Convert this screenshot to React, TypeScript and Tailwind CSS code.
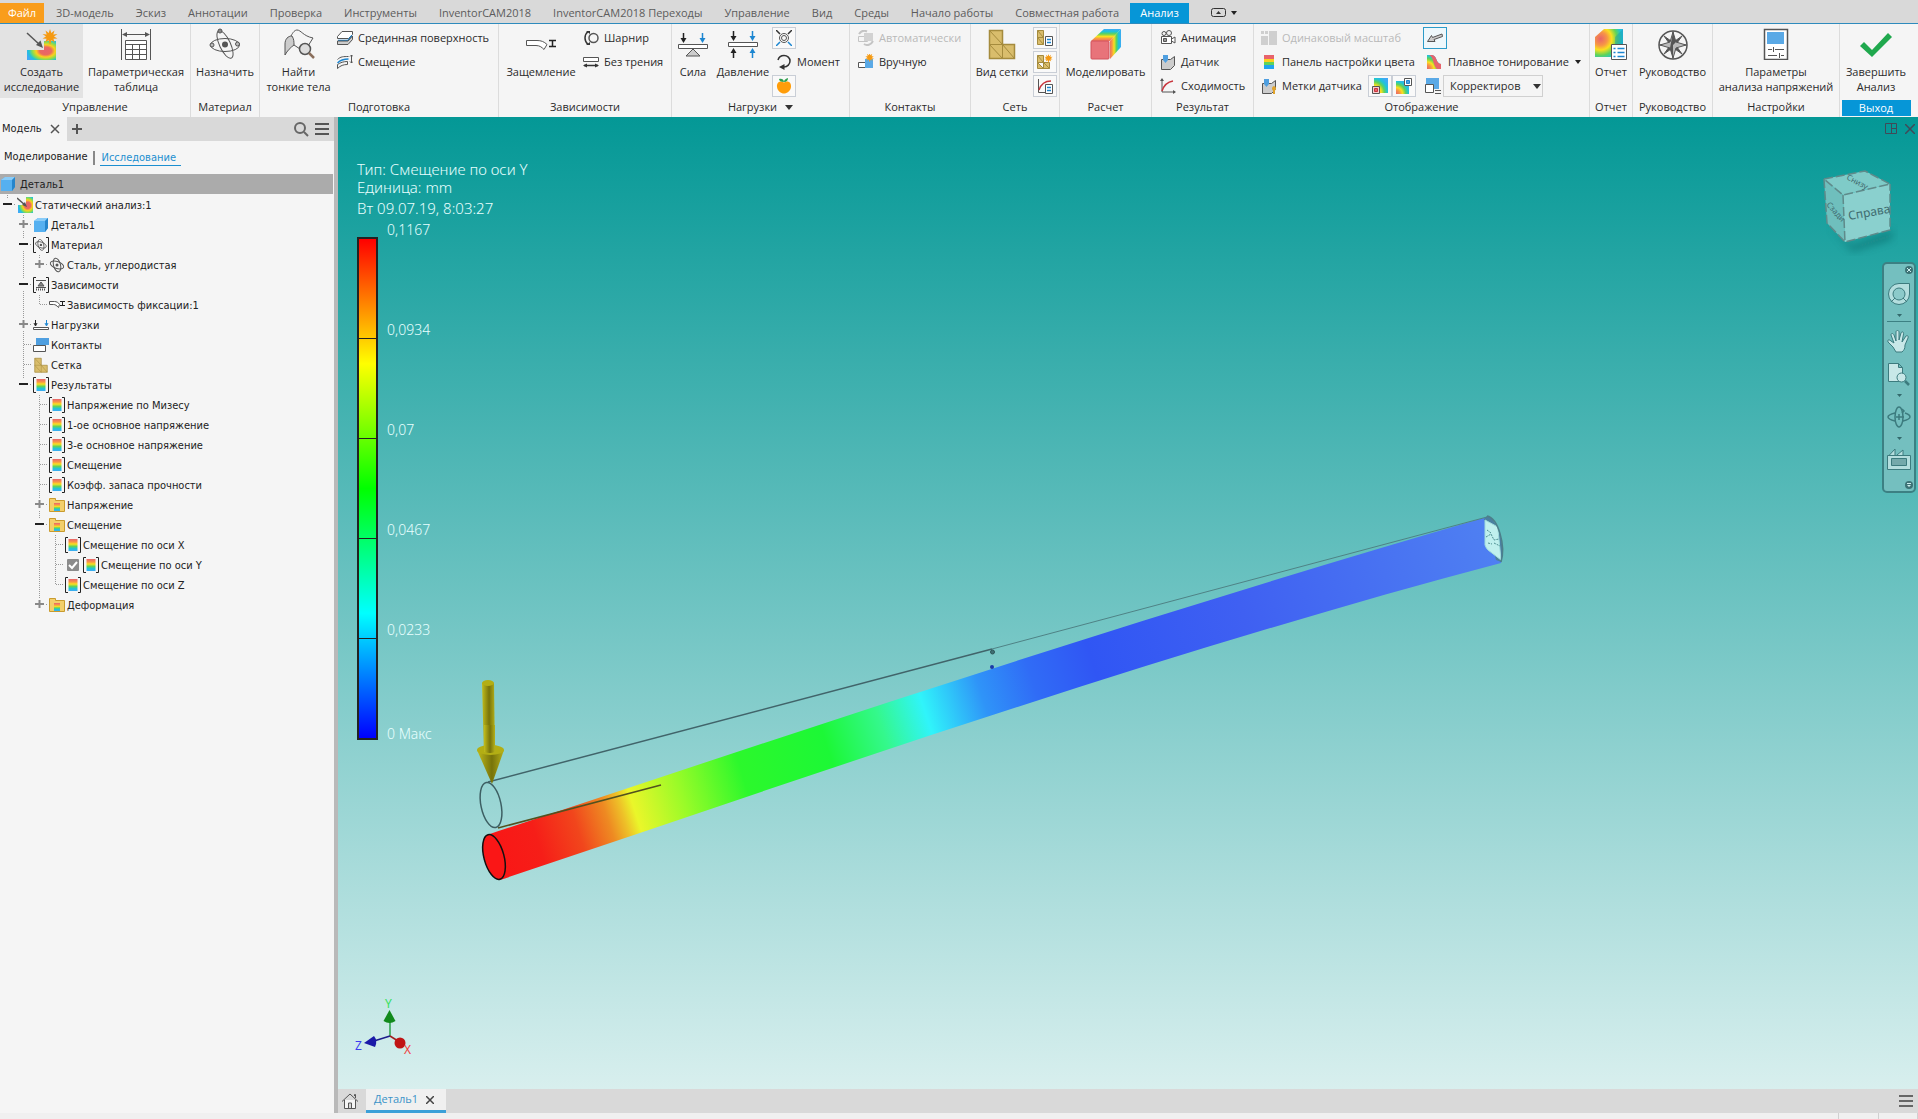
import type { ReactNode } from 'react';

const TABS_TOP = [
  '3D-модель',
  'Эскиз',
  'Аннотации',
  'Проверка',
  'Инструменты',
  'InventorCAM2018',
  'InventorCAM2018 Переходы',
  'Управление',
  'Вид',
  'Среды',
  'Начало работы',
  'Совместная работа',
];

const RAINBOW: [string, string][] = [
  ['0', '#e8636b'],
  ['0.25', '#f79646'],
  ['0.42', '#fbe01e'],
  ['0.62', '#5fd35a'],
  ['0.8', '#1fc4d8'],
  ['1', '#3fa9f5'],
];

/* ---------- gradients shared by the icons ---------- */

function Defs() {
  const stops = RAINBOW.map(([o, c]) => <stop key={o} offset={o} stopColor={c} />);
  return (
    <svg className="absolute h-0 w-0" aria-hidden="true">
      <defs>
        <linearGradient id="rain" x1="0" y1="0" x2="0" y2="1">{stops}</linearGradient>
        <linearGradient id="rainTop" gradientUnits="userSpaceOnUse" x1="0" y1="14" x2="0" y2="1">{stops}</linearGradient>
        <linearGradient id="rainSide" gradientUnits="userSpaceOnUse" x1="19" y1="0" x2="31" y2="0">{stops}</linearGradient>
        <radialGradient id="heat" cx="0.64" cy="0.52" r="0.68">
          <stop offset="0" stopColor="#e8636b" />
          <stop offset="0.3" stopColor="#ea6a5e" />
          <stop offset="0.48" stopColor="#fbd01e" />
          <stop offset="0.66" stopColor="#8fdc4a" />
          <stop offset="0.85" stopColor="#1fc4d8" />
          <stop offset="1" stopColor="#3fa9f5" />
        </radialGradient>
        <radialGradient id="heatL" cx="0.2" cy="0.35" r="0.95">{stops}</radialGradient>
        <radialGradient id="heatB" cx="0" cy="1" r="1.2">{stops}</radialGradient>
      </defs>
    </svg>
  );
}

function Svg({ size = 16, className = '', children }: { size?: 16 | 32; className?: string; children: ReactNode }) {
  return (
    <svg
      viewBox={`0 0 ${size} ${size}`}
      className={`${size === 32 ? 'h-8 w-8' : 'h-4 w-4'} shrink-0 ${className}`}
      fill="none"
      stroke="#555"
      aria-hidden="true"
    >
      {children}
    </svg>
  );
}

const STAR = 'M8 0l1.3 4 3.2-2.600-1.200 4 4.200-.4-3.500 2.500 3.500 2-4.100.3 1.500 3.700-3.400-2.300L8 16l-1.500-4.800-3.400 2.300 1.500-3.700L.5 9.500l3.500-2L.5 5l4.200.4-1.200-4L6.700 4z';

const IconStudy = () => (
  <Svg size={32}>
    <path d="M1 22h17v-9h12v19H1z" fill="url(#heat)" stroke="none" />
    <path d="M1 5l13 12" strokeWidth="1.5" />
    <path d="M17 20l-7-3 4.500-4.500z" fill="#555" stroke="none" />
    <g transform="translate(16 1)"><path d={STAR} fill="#f59a12" stroke="none" /></g>
  </Svg>
);

const IconTable = () => (
  <Svg size={32}>
    <path d="M1.500 1v31M30.500 1v31M3 6.500h26" />
    <path d="M2 6.500l5-2.500v5zM30 6.500l-5-2.500v5z" fill="#555" stroke="none" />
    <path d="M5.500 12.500h21v19h-21z" fill="#fff" />
    <path d="M5.500 16.500h21M5.500 21.500h21M5.500 26.500h21M12.500 16.500v15M19.500 16.500v15" />
  </Svg>
);

const IconAtom = () => (
  <Svg size={32}>
    <ellipse cx="16" cy="17" rx="14.500" ry="6.500" />
    <ellipse cx="16" cy="16.500" rx="15" ry="5.500" transform="rotate(65 16 16.500)" />
    <circle cx="16" cy="16.500" r="3" fill="#555" stroke="none" />
    <circle cx="11" cy="3" r="2" fill="#888" />
    <circle cx="3" cy="17" r="2" fill="#bbb" />
    <circle cx="28.500" cy="16" r="2" fill="#bbb" />
  </Svg>
);

const IconThin = () => (
  <Svg size={32}>
    <path d="M2 27V16C2 11 5 8 9 8c2 3 2 6 2 9-3 2-7 6-9 10z" fill="#ccc" />
    <path d="M8 8c2-4 4-6 6-6 4 0 6 6 16 8l-5 8M11 17l6 4" />
    <circle cx="22" cy="21" r="5.500" fill="#ddd" strokeWidth="1.500" />
    <path d="M26 25l5 5" stroke="#8a6f5c" strokeWidth="2.500" />
  </Svg>
);

const IconMidsurface = () => (
  <Svg>
    <path d="M.5 6.500L5 1.500h10.500v3l-4 4H.5z" fill="#fff" />
    <path d="M1 10.500h10l4-5" stroke="#1c86d1" strokeWidth="1.500" />
    <path d="M.5 11v3.500H11l4.500-5V6L11 11z" fill="#ccc" />
  </Svg>
);

const IconOffset = () => (
  <Svg>
    <path d="M.5 5.500c3-3 6-3 11-3M.5 14.500v-4c3-2 6-3 10-3v3c-4 0-7 1-10 4z" />
    <path d="M.5 9c3-3 6-4 11-4" stroke="#1c86d1" strokeWidth="1.500" />
    <path d="M14.500 1v8M13 2.500L14.500 1 16 2.500M13 7.500L14.500 9 16 7.500" />
  </Svg>
);

const IconFixed = () => (
  <Svg size={32}>
    <path d="M1.500 12.500H12c4 0 7 1 10 4l-3 5c-2-2-4-4-8-4H1.500z" fill="#fff" />
    <path d="M24 12.500h7M24 18.500h7M27.500 12.500v6" stroke="#222" strokeWidth="1.500" />
  </Svg>
);

const IconPin = () => (
  <Svg>
    <path d="M5 1.500C1 5 1 11 5 14.500" stroke="#333" strokeWidth="1.500" />
    <path d="M3 1h4v3zM3 15h4v-3z" fill="#333" stroke="none" />
    <circle cx="10.500" cy="8" r="4.500" strokeWidth="1.500" />
  </Svg>
);

const IconFrictionless = () => (
  <Svg>
    <path d="M.5 3.500h15v4H.5z" fill="#fff" />
    <path d="M1 11.500h14" stroke="#333" strokeWidth="1.500" />
    <path d="M0 11.500L4 9.500v4zM16 11.500l-4-2v4z" fill="#333" stroke="none" />
  </Svg>
);

const IconForce = () => (
  <Svg size={32}>
    <path d="M1.500 16.500h29v4h-29z" fill="#fff" />
    <path d="M16 21l-7 7h14z" fill="#ccc" />
    <path d="M6.500 5v8" stroke="#222" strokeWidth="1.500" />
    <path d="M3.500 10h6l-3 5z" fill="#222" stroke="none" />
    <path d="M25.500 5v8" stroke="#1c86d1" strokeWidth="1.500" />
    <path d="M22.500 10h6l-3 5z" fill="#1c86d1" stroke="none" />
  </Svg>
);

const IconPressure = () => (
  <Svg size={32}>
    <path d="M1.500 14.500h29v4h-29z" fill="#fff" />
    <path d="M6.500 3v7M6.500 23v7" stroke="#222" strokeWidth="1.500" />
    <path d="M3.500 8h6l-3 5zM3.500 25h6l-3-5z" fill="#222" stroke="none" />
    <path d="M25.500 3v7M25.500 23v7" stroke="#1c86d1" strokeWidth="1.500" />
    <path d="M22.500 8h6l-3 5zM22.500 25h6l-3-5z" fill="#1c86d1" stroke="none" />
  </Svg>
);

const IconBearing = () => (
  <Svg>
    <circle cx="8" cy="8" r="4.500" />
    <circle cx="8" cy="8" r="2.500" />
    <path d="M0 0l4 4M16 0l-4 4" stroke="#333" strokeWidth="1.500" />
    <path d="M0 16l4-4M16 16l-4-4" stroke="#1c86d1" strokeWidth="1.500" />
  </Svg>
);

const IconMoment = () => (
  <Svg>
    <path d="M2 6C3 2.500 5 1.500 8 1.500c3.500 0 6 2.500 6 5.500s-2.500 6-6 6H7" stroke="#333" strokeWidth="1.500" />
    <path d="M8.500 10v6L3 13z" fill="#333" stroke="none" />
  </Svg>
);

const IconGravity = () => (
  <Svg>
    <path d="M8 4.500C4 2 .5 4.500 1 9c.5 4 4 6.500 7 6.500s6.500-2.500 7-6.500c.5-4.500-3-7-7-4.500z" fill="#ff9d0a" stroke="none" />
    <path d="M3 1c2-1 5 0 5 3-3 0-5-1-5-3zM8 4c0-2 1-3 4-4 0 2-1 4-4 4z" fill="#2e9e4f" stroke="none" />
  </Svg>
);

const IconAuto = () => (
  <Svg>
    <path d="M1 4C3 1 6 0 9 1.500M6 14c3 2 7 1 9-3" stroke="#c4c4c4" strokeWidth="2" />
    <path d="M.5 6.500h9v5h-9z" stroke="#c4c4c4" />
    <path d="M6 3h9v8H6z" fill="#d2d2d2" stroke="none" />
  </Svg>
);

const IconManual = () => (
  <Svg>
    <path d="M.5 8.500h8v5h-8z" fill="#fff" />
    <path d="M7 5h8v9H7z" fill="#5aa9e6" stroke="none" />
    <g transform="translate(7 -1) scale(.58)"><path d={STAR} fill="#f59a12" stroke="none" /></g>
  </Svg>
);

const IconMesh = ({ size = 32 }: { size?: 16 | 32 }) => (
  <svg viewBox="0 0 32 32" className={size === 32 ? 'h-8 w-8' : 'h-4 w-4 shrink-0'} fill="#d9bd6c" stroke="#a58b3d" aria-hidden="true">
    <path d="M3.500 2.500h13v14h12v14h-25z" strokeWidth="1.500" />
    <path d="M3.500 2.500l13 14h-13l13 14v-14l12 14" />
  </svg>
);

const Sheet = () => (
  <g>
    <path d="M8.500 6.500h7v9h-7z" fill="#fff" />
    <path d="M10 9.500h4M10 12.500h4" stroke="#1c86d1" strokeWidth="1.500" />
  </g>
);

const IconMeshSettings = () => (
  <Svg>
    <path d="M.5.500h6v14h-6zM.5 7.500h6M.5.500l6 7M.5 7.500l6 7" fill="#d9bd6c" stroke="#a58b3d" />
    <Sheet />
  </Svg>
);

const IconMeshLocal = () => (
  <Svg>
    <path d="M.5 1.500h6v7h6v6h-12zM.5 1.500l6 7H.5l6 6v-6l6 6" fill="#d9bd6c" stroke="#a58b3d" />
    <g transform="translate(7 0) scale(.56)"><path d={STAR} fill="#f59a12" stroke="none" /></g>
  </Svg>
);

const IconConvSettings = () => (
  <Svg>
    <path d="M1.500 1v13.500H8" />
    <path d="M2 12C4 6 8 3 14 3" stroke="#c8343c" strokeWidth="1.500" />
    <Sheet />
  </Svg>
);

const IconSimulate = () => (
  <Svg size={32}>
    <path d="M1 13L14 1h17L20 13z" fill="url(#rainTop)" stroke="none" />
    <path d="M20 13L31 1v18L20 31z" fill="url(#rainSide)" stroke="none" />
    <rect x="1" y="13" width="18" height="18" rx="1" fill="#e8737a" stroke="#d2525c" />
  </Svg>
);

const IconAnimation = () => (
  <Svg>
    <circle cx="4" cy="3.500" r="2" /><circle cx="9" cy="3" r="2.500" />
    <path d="M1.500 6.500h10v7h-10zM11.500 9l3.500-2v6l-3.500-2" fill="#fff" />
    <path d="M3.500 8.500h3v3h-3z" fill="#999" />
  </Svg>
);

const IconProbe = ({ tag = false }: { tag?: boolean }) => (
  <Svg>
    <path d="M1.500 5.500h9l4-3v9l-4 4h-9z" fill="#ccc" />
    <path d="M3 1h5v5L5.500 9 3 6z" fill="#4f9fe0" stroke="none" />
    {tag && <path d="M13 8a2.500 2.500 0 011 4.500V16h-2v-3.500A2.500 2.500 0 0113 8z" fill="#e0a32c" stroke="none" />}
  </Svg>
);

const IconConvergence = () => (
  <Svg>
    <path d="M2 1v13h13" />
    <path d="M0 3L2 0l2 3zM13 12l3 2-3 2z" fill="#555" stroke="none" />
    <path d="M2 13C4 7 7 4 13 3" stroke="#c8343c" strokeWidth="1.500" />
  </Svg>
);

const IconScale = () => (
  <Svg>
    <path d="M0 6h7v9H0zM8 1h8v14H8zM0 1h3v3H0zM4 1h3v3H4z" fill="#cfcfcf" stroke="none" />
  </Svg>
);

const IconColorBar = () => (
  <Svg>
    <rect x="3" y="1" width="10" height="4" fill="#e8636b" stroke="none" />
    <rect x="3" y="5" width="10" height="3" fill="#fbd01e" stroke="none" />
    <rect x="3" y="8" width="10" height="3" fill="#5fd35a" stroke="none" />
    <rect x="3" y="11" width="10" height="4" fill="#1fa4f0" stroke="none" />
  </Svg>
);

const IconMax = () => (
  <Svg>
    <path d="M2 0h14v15H8c0-5-2-7-6-7z" fill="url(#heatB)" stroke="none" />
    <path d="M.5 8.500h7v7h-7z" fill="#f7d0d0" />
    <path d="M2.500 10.500h3v3h-3z" fill="#e8636b" stroke="#c8343c" />
  </Svg>
);

const IconMin = () => (
  <Svg>
    <path d="M0 3h8v5h5v8H0z" fill="url(#heatB)" stroke="none" />
    <path d="M8.500.500h7v7h-7z" fill="#fff" />
    <path d="M10.500 2.500h3v3h-3z" fill="#4f9fe0" stroke="#1c86d1" />
  </Svg>
);

const IconBoundary = () => (
  <Svg>
    <path d="M.5 11.500l4-6 1 2L15 4l.5 2.500L7 9.500l1 2z" fill="#ccc" />
  </Svg>
);

const IconShading = () => (
  <Svg>
    <path d="M1 1h5c5 0 4 9 9 9v5H1z" fill="url(#heatB)" stroke="none" />
    <path d="M3 1h3c5 0 4 9 9 9v5h-4C7 12 8 3 3 1z" fill="#e8636b" stroke="none" />
  </Svg>
);

const IconAdjust = () => (
  <Svg>
    <path d="M1 0h13v11H1z" fill="#5aa9e6" stroke="none" />
    <path d="M.5 6.500h8v8h-8z" fill="#fff" />
    <path d="M10 12.500h6M10 15.500h6" />
  </Svg>
);

const IconReport = () => (
  <Svg size={32}>
    <path d="M0 9l9-8h19v28H0z" fill="url(#heatL)" stroke="none" />
    <path d="M20 9l8-8v28h-8z" fill="#1b9bb0" opacity=".45" stroke="none" />
    <path d="M16.500 16.500h15v15h-15z" fill="#fff" />
    <path d="M18.500 20.500h2M18.500 24.500h2M18.500 28.500h2M22.500 20.500h7M22.500 24.500h7M22.500 28.500h7" stroke="#1c86d1" strokeWidth="1.500" />
  </Svg>
);

const IconGuide = () => (
  <Svg size={32}>
    <circle cx="16" cy="17" r="14" strokeWidth="1.500" />
    <path d="M16 3v28M2 17h28" />
    <path d="M7 8l7 5-2 2zM25 8l-7 5 2 2zM7 26l7-5-2-2zM25 26l-7-5 2-2z" fill="#555" />
    <path d="M16 4l3 10 10 3-10 3-3 10-3-10-10-3 10-3z" fill="#bbb" />
    <path d="M16 4v26l-3-10zM16 4l3 10-3 3z" fill="#555" stroke="none" />
  </Svg>
);

const IconSettings = () => (
  <Svg size={32}>
    <path d="M4.500 1.500h23v30h-23z" fill="#fff" strokeWidth="1.500" />
    <path d="M7 4h17v12H7z" fill="#5aa9e6" stroke="none" />
    <path d="M8 21.500h4M15 21.500h9M13.500 19v5M8 27.500h9M21 27.500h3M19.500 25v5" />
  </Svg>
);

const IconFinish = () => (
  <Svg size={32}>
    <path d="M0 18l4-4 8 8L28 5l4 4-20 20z" fill="#1fa84d" stroke="none" />
  </Svg>
);

/* ---------- tree icons ---------- */

const IconPart = () => (
  <Svg>
    <path d="M1 4l4-3h10v10l-3 4H1z" fill="#55b0f0" stroke="none" />
    <path d="M1 4l4-3h10l-3 3z" fill="#8accf8" stroke="none" />
    <path d="M12 4l3-3v10l-3 4z" fill="#2585cb" stroke="none" />
  </Svg>
);

const IconStudySmall = () => (
  <Svg>
    <path d="M1 8h8V0h7v16H1z" fill="url(#heat)" stroke="none" />
    <path d="M0 1l8 7" strokeWidth="1.500" />
    <path d="M10 10L5 8l3-3z" fill="#555" stroke="none" />
  </Svg>
);

const Brackets = () => <path d="M3 .5H.500v15H3M13 .5h2.500v15H13" stroke="#222" />;

const AtomShape = () => (
  <g>
    <ellipse cx="8" cy="8" rx="7" ry="3.500" transform="rotate(20 8 8)" />
    <ellipse cx="8" cy="8" rx="7" ry="3.500" transform="rotate(75 8 8)" />
    <circle cx="8" cy="8" r="1.500" fill="#555" stroke="none" />
  </g>
);

const IconMaterial = () => (
  <Svg><Brackets /><g transform="translate(1.500 1.500) scale(.8)"><AtomShape /></g></Svg>
);

const IconSteel = () => <Svg><AtomShape /></Svg>;

const IconConstraints = () => (
  <Svg>
    <Brackets />
    <path d="M3 3.500h10M8 5l-3 4h6zM3 10.500h10" fill="#888" />
    <path d="M3 12.500h10" strokeDasharray="1 1" strokeWidth="2" />
  </Svg>
);

const IconFixSmall = () => (
  <Svg>
    <path d="M.5 4.500h5c2 0 4 1 5 3l-1 3c-2-2-3-3-5-3h-4z" fill="#fff" />
    <path d="M11 4.500h5M11 8.500h5M13.500 4.500v4" stroke="#222" />
  </Svg>
);

const IconLoads = () => (
  <Svg>
    <path d="M.5 10.500h15v2H.5z" fill="#fff" />
    <path d="M2.500 3v5M1 6l1.500 3L4 6" stroke="#222" />
    <path d="M13.500 3v5M12 6l1.500 3L15 6" stroke="#1c86d1" />
  </Svg>
);

const IconContacts = () => (
  <Svg>
    <path d="M3 1h13v7H3z" fill="#4f9fe0" stroke="none" />
    <path d="M.5 8.500h12v6H.500z" fill="#fff" />
  </Svg>
);

const IconResult = () => (
  <Svg>
    <Brackets />
    <path d="M3.500 2h9v12h-9z" fill="url(#rain)" stroke="none" />
  </Svg>
);

const IconFolder = () => (
  <Svg>
    <path d="M.5 1.500h6v2h9v11H.5z" fill="#f3cf6b" stroke="#c89b2e" />
    <path d="M5 6h6v8H5z" fill="url(#rain)" stroke="none" />
  </Svg>
);

/* ---------- ribbon ---------- */

function Big({ icon, lines, active = false, className = '' }: { icon: ReactNode; lines: string[]; active?: boolean; className?: string }) {
  return (
    <button className={`flex h-[74px] shrink-0 flex-col items-center gap-1 pt-1 leading-[15px] ${active ? 'bg-[#e3e3e3]' : ''} ${className}`}>
      {icon}
      <span className="flex flex-col whitespace-nowrap">
        {lines.map((l) => <span key={l}>{l}</span>)}
      </span>
    </button>
  );
}

function Small({ icon, label, disabled = false }: { icon: ReactNode; label: string; disabled?: boolean }) {
  return (
    <button disabled={disabled} className="flex h-6 items-center gap-[5px] whitespace-nowrap disabled:text-[#b9b9b9]">
      {icon}
      {label}
    </button>
  );
}

function Boxed({ icon, label, active = false }: { icon: ReactNode; label: string; active?: boolean }) {
  return (
    <button
      aria-label={label}
      className={`flex h-[22px] w-6 items-center justify-center border ${active ? 'border-[#2b9bc9] bg-[#eef8fc]' : 'border-[#c9ced6] bg-[#f9f9f9]'}`}
    >
      {icon}
    </button>
  );
}

function Group({ title, className, children }: { title: ReactNode; className: string; children: ReactNode }) {
  return (
    <section className={`flex shrink-0 flex-col border-r border-[#dcdcdc] ${className}`}>
      <div className="flex h-[74px] items-start">{children}</div>
      <div className="flex h-[19px] items-center justify-center whitespace-nowrap">{title}</div>
    </section>
  );
}

const Col = ({ className = 'pt-[2px]', children }: { className?: string; children: ReactNode }) => (
  <div className={`flex flex-col items-start ${className}`}>{children}</div>
);

const Caret = () => (
  <svg viewBox="0 0 8 5" className="h-[5px] w-2" fill="#333" aria-hidden="true"><path d="M0 0h8L4 5z" /></svg>
);

const CaretSmall = () => (
  <svg viewBox="0 0 6 4" className="h-1 w-[6px]" fill="#222" aria-hidden="true"><path d="M0 0h6L3 4z" /></svg>
);

function Ribbon() {
  return (
    <div className="flex h-[93px] overflow-hidden bg-[#f5f5f5] text-[11px] text-[#2b2b2b]">
      <Group title="Управление" className="w-[191px]">
        <Big active icon={<IconStudy />} lines={['Создать', 'исследование']} className="w-[83px]" />
        <Big icon={<IconTable />} lines={['Параметрическая', 'таблица']} className="w-[106px]" />
      </Group>
      <Group title="Материал" className="w-[69px]">
        <Big icon={<IconAtom />} lines={['Назначить']} className="w-full" />
      </Group>
      <Group title="Подготовка" className="w-[239px]">
        <Big icon={<IconThin />} lines={['Найти', 'тонкие тела']} className="w-[77px]" />
        <Col>
          <Small icon={<IconMidsurface />} label="Срединная поверхность" />
          <Small icon={<IconOffset />} label="Смещение" />
        </Col>
      </Group>
      <Group title="Зависимости" className="w-[173px]">
        <Big icon={<IconFixed />} lines={['Защемление']} className="w-[84px]" />
        <Col>
          <Small icon={<IconPin />} label="Шарнир" />
          <Small icon={<IconFrictionless />} label="Без трения" />
        </Col>
      </Group>
      <Group title={<span className="flex items-center gap-2">Нагрузки <Caret /></span>} className="w-[178px]">
        <Big icon={<IconForce />} lines={['Сила']} className="w-[42px]" />
        <Big icon={<IconPressure />} lines={['Давление']} className="w-[58px]" />
        <Col className="gap-[2px] pt-[3px]">
          <Boxed icon={<IconBearing />} label="Опорная нагрузка" />
          <button className="flex h-[22px] items-center gap-[5px] pl-1"><IconMoment />Момент</button>
          <Boxed icon={<IconGravity />} label="Сила тяжести" />
        </Col>
      </Group>
      <Group title="Контакты" className="w-[121px]">
        <Col className="pt-[2px] pl-2">
          <Small disabled icon={<IconAuto />} label="Автоматически" />
          <Small icon={<IconManual />} label="Вручную" />
        </Col>
      </Group>
      <Group title="Сеть" className="w-[89px]">
        <Big icon={<IconMesh />} lines={['Вид сетки']} className="w-[62px]" />
        <Col className="gap-[2px] pt-[3px]">
          <Boxed icon={<IconMeshSettings />} label="Параметры сетки" />
          <Boxed icon={<IconMeshLocal />} label="Локальная сетка" />
          <Boxed icon={<IconConvSettings />} label="Параметры сходимости" />
        </Col>
      </Group>
      <Group title="Расчет" className="w-[92px]">
        <Big icon={<IconSimulate />} lines={['Моделировать']} className="w-full" />
      </Group>
      <Group title="Результат" className="w-[102px]">
        <Col className="pt-[2px] pl-2">
          <Small icon={<IconAnimation />} label="Анимация" />
          <Small icon={<IconProbe />} label="Датчик" />
          <Small icon={<IconConvergence />} label="Сходимость" />
        </Col>
      </Group>
      <Group title="Отображение" className="w-[336px]">
        <Col className="mr-[7px] w-[162px] pt-[2px] pl-[7px]">
          <Small disabled icon={<IconScale />} label="Одинаковый масштаб" />
          <Small icon={<IconColorBar />} label="Панель настройки цвета" />
          <div className="flex w-full items-center justify-between">
            <Small icon={<IconProbe tag />} label="Метки датчика" />
            <div className="flex">
              <Boxed icon={<IconMax />} label="Максимум" />
              <Boxed icon={<IconMin />} label="Минимум" />
            </div>
          </div>
        </Col>
        <Col className="gap-[2px] pt-[3px]">
          <Boxed active icon={<IconBoundary />} label="Граничные условия" />
          <button className="flex h-[22px] items-center gap-[6px] whitespace-nowrap pl-[3px]">
            <IconShading />Плавное тонирование<CaretSmall />
          </button>
          <label className="flex h-[22px] items-center gap-[2px] pl-[2px]">
            <IconAdjust />
            <span className="relative flex items-center">
              <select aria-label="Масштаб смещения" className="h-[22px] w-[100px] appearance-none border border-[#d0d0d0] bg-[#f5f5f5] px-[6px]">
                <option>Корректиров</option>
              </select>
              <span className="pointer-events-none absolute right-[2px]"><Caret /></span>
            </span>
          </label>
        </Col>
      </Group>
      <Group title="Отчет" className="w-[43px]">
        <Big icon={<IconReport />} lines={['Отчет']} className="w-full" />
      </Group>
      <Group title="Руководство" className="w-20">
        <Big icon={<IconGuide />} lines={['Руководство']} className="w-full" />
      </Group>
      <Group title="Настройки" className="w-[127px]">
        <Big icon={<IconSettings />} lines={['Параметры', 'анализа напряжений']} className="w-full" />
      </Group>
      <Group title={<span className="w-[69px] bg-[#0696d7] text-center leading-4 text-white">Выход</span>} className="w-[72px] border-r-0">
        <Big icon={<IconFinish />} lines={['Завершить', 'Анализ']} className="w-full" />
      </Group>
    </div>
  );
}

function TopTabs() {
  return (
    <nav className="flex h-6 items-end border-b border-[#2e8bbd] bg-[#d9d9d9] text-[11px] text-[#5c5c5c]">
      <button className="mr-px h-5 w-11 bg-[#f99d1c] text-white">Файл</button>
      {TABS_TOP.map((t) => (
        <button key={t} className="h-5 whitespace-nowrap px-[11px]">{t}</button>
      ))}
      <button className="h-5 w-[59px] bg-[#0696d7] text-white">Анализ</button>
      <button aria-label="Свернуть ленту" className="ml-[22px] flex h-5 items-center gap-1">
        <svg viewBox="0 0 16 10" className="h-[10px] w-4" fill="none" stroke="#333" aria-hidden="true">
          <rect x=".5" y=".5" width="14" height="8" rx="2" />
          <path d="M5 6h5L7.500 3z" fill="#333" stroke="none" />
        </svg>
        <CaretSmall />
      </button>
    </nav>
  );
}

/* ---------- browser tree ---------- */

type Node = {
  label: string;
  icon: ReactNode;
  // one character per level: "|" passes by, " " empty, "t" branch, "l" last branch
  lines: string;
  open?: boolean;
  closed?: boolean;
  checked?: boolean;
};

const TREE: Node[] = [
  { label: 'Статический анализ:1', icon: <IconStudySmall />, lines: 'l', open: true },
  { label: 'Деталь1', icon: <IconPart />, lines: ' t', closed: true },
  { label: 'Материал', icon: <IconMaterial />, lines: ' t', open: true },
  { label: 'Сталь, углеродистая', icon: <IconSteel />, lines: ' |l', closed: true },
  { label: 'Зависимости', icon: <IconConstraints />, lines: ' t', open: true },
  { label: 'Зависимость фиксации:1', icon: <IconFixSmall />, lines: ' |l' },
  { label: 'Нагрузки', icon: <IconLoads />, lines: ' t', closed: true },
  { label: 'Контакты', icon: <IconContacts />, lines: ' t' },
  { label: 'Сетка', icon: <IconMesh size={16} />, lines: ' t' },
  { label: 'Результаты', icon: <IconResult />, lines: ' l', open: true },
  { label: 'Напряжение по Мизесу', icon: <IconResult />, lines: '  t' },
  { label: '1-ое основное напряжение', icon: <IconResult />, lines: '  t' },
  { label: '3-е основное напряжение', icon: <IconResult />, lines: '  t' },
  { label: 'Смещение', icon: <IconResult />, lines: '  t' },
  { label: 'Коэфф. запаса прочности', icon: <IconResult />, lines: '  t' },
  { label: 'Напряжение', icon: <IconFolder />, lines: '  t', closed: true },
  { label: 'Смещение', icon: <IconFolder />, lines: '  t', open: true },
  { label: 'Смещение по оси X', icon: <IconResult />, lines: '  |t' },
  { label: 'Смещение по оси Y', icon: <IconResult />, lines: '  |t', checked: true },
  { label: 'Смещение по оси Z', icon: <IconResult />, lines: '  |l' },
  { label: 'Деформация', icon: <IconFolder />, lines: '  l', closed: true },
];

function TreeRow({ node }: { node: Node }) {
  const expander = node.open || node.closed;
  return (
    <li className="flex h-5 items-center">
      {node.lines.split('').map((c, i) => (
        <svg key={i} viewBox="0 0 16 20" className="h-5 w-4 shrink-0" fill="none" stroke="#999" aria-hidden="true">
          {c !== ' ' && <path d={c === 'l' ? 'M7.500 0v10' : 'M7.500 0v20'} strokeDasharray="1 1" />}
          {(c === 't' || c === 'l') && <path d="M8 9.500h8" strokeDasharray="1 1" />}
          {expander && i === node.lines.length - 1 && (
            <g strokeWidth="2">
              <path d="M2 4h11v11H2z" fill="#f5f5f5" stroke="none" />
              <path d="M3 9h9" stroke={node.open ? '#222' : '#888'} />
              {node.closed && <path d="M7.500 5v8" stroke="#888" />}
            </g>
          )}
        </svg>
      ))}
      {node.checked ? (
        <label className="flex items-center">
          <span className="relative mr-[3px] ml-[3px] h-3 w-3">
            <input type="checkbox" defaultChecked className="block h-3 w-3 appearance-none rounded-[1px] bg-[#8b8b8b]" />
            <svg viewBox="0 0 12 12" className="pointer-events-none absolute inset-0 h-3 w-3" fill="none" stroke="#fff" strokeWidth="2" aria-hidden="true">
              <path d="M2 6l3 3 5-6" />
            </svg>
          </span>
          <span className="pl-px">{node.icon}</span>
          <span className="whitespace-nowrap pt-[2px] pl-[2px]">{node.label}</span>
        </label>
      ) : (
        <>
          <span className="pl-px">{node.icon}</span>
          <span className="whitespace-nowrap pt-[2px] pl-[2px]">{node.label}</span>
        </>
      )}
    </li>
  );
}

function Browser() {
  return (
    <aside className="flex w-[338px] shrink-0 flex-col border-r-4 border-[#b9b9b9] bg-[#f5f5f5] font-['DejaVu_Sans_Condensed','DejaVu_Sans',sans-serif] text-[11px] text-[#222]">
      <div className="flex h-6 items-center bg-[#d9d9d9]">
        <div className="flex h-6 w-[67px] items-center gap-2 bg-[#f5f5f5] pl-[2px]">
          Модель
          <button aria-label="Закрыть">
            <svg viewBox="0 0 10 10" className="h-[10px] w-[10px]" stroke="#555" strokeWidth="1.500" aria-hidden="true"><path d="M1 1l8 8M9 1L1 9" /></svg>
          </button>
        </div>
        <button aria-label="Добавить" className="ml-1">
          <svg viewBox="0 0 12 12" className="h-3 w-3" stroke="#555" strokeWidth="2" aria-hidden="true"><path d="M6 1v10M1 6h10" /></svg>
        </button>
        <div className="ml-auto flex items-center gap-[6px] pr-[5px]">
          <button aria-label="Поиск">
            <svg viewBox="0 0 16 16" className="h-4 w-4" fill="none" stroke="#666" strokeWidth="2" aria-hidden="true"><circle cx="7" cy="7" r="5" /><path d="M11 11l4 4" /></svg>
          </button>
          <button aria-label="Меню">
            <svg viewBox="0 0 14 12" className="h-3 w-[14px]" stroke="#555" strokeWidth="2" aria-hidden="true"><path d="M0 1h14M0 6h14M0 11h14" /></svg>
          </button>
        </div>
      </div>
      <div className="flex h-[33px] items-center pl-1">
        <a href="#model">Моделирование</a>
        <span className="mx-[5px] h-[14px] w-[2px] bg-[#888]" />
        <a href="#study" className="border-b border-[#1c8fd0] pr-[5px] pl-[2px] leading-[15px] text-[#1c8fd0]">Исследование</a>
      </div>
      <div className="mr-px flex h-5 items-center gap-1 bg-[#ababab]">
        <IconPart />
        <span className="pt-[2px]">Деталь1</span>
      </div>
      <ul className="pt-px">
        {TREE.map((n, i) => <TreeRow key={i} node={n} />)}
      </ul>
    </aside>
  );
}

/* ---------- 3D view ---------- */

const BEAM: [string, string][] = [
  ['0', '#fa1616'],
  ['0.045', '#f61e18'],
  ['0.085', '#f1461c'],
  ['0.115', '#ee8a22'],
  ['0.13', '#eec028'],
  ['0.142', '#eaf62a'],
  ['0.19', '#98fb28'],
  ['0.25', '#2cf82c'],
  ['0.335', '#1cf836'],
  ['0.39', '#34f88c'],
  ['0.434', '#30f4fa'],
  ['0.49', '#2f94f8'],
  ['0.54', '#306cf6'],
  ['0.6', '#3056f4'],
  ['0.75', '#3f60f2'],
  ['1', '#4f80f2'],
];

function Scene() {
  return (
    <svg viewBox="338 117 1580 972" preserveAspectRatio="xMinYMin meet" className="absolute inset-0 h-full w-full" fill="none" aria-hidden="true">
      <defs>
        <linearGradient id="beam" gradientUnits="userSpaceOnUse" x1="493" y1="857" x2="1494" y2="539">
          {BEAM.map(([o, c]) => <stop key={o} offset={o} stopColor={c} />)}
        </linearGradient>
        <linearGradient id="arrow">
          <stop offset="0" stopColor="#c2bd1c" />
          <stop offset="0.55" stopColor="#77730a" />
          <stop offset="1" stopColor="#b5b01a" />
        </linearGradient>
      </defs>

      {/* deformed beam */}
      <path d="M487 835C820 724 1154 613 1487 517C1497 520 1505 546 1501 563C1168 651 836 767 500 880Z" fill="url(#beam)" />
      <ellipse cx="494" cy="857" rx="10" ry="23" transform="rotate(-15 494 857)" fill="#fa1616" stroke="#111" strokeWidth="1.500" />
      <path d="M1487 516C1497 518 1506 545 1501 562L1496 560L1484 519Z" fill="#4a7fa0" />
      <path d="M1485 520l11 6q2 1 2 3l3 31-13-10q-2-2-3-5z" fill="#c0f0ee" stroke="#9fdcdc" />
      <path d="M1486 537l5-3 3 6 5-1M1487 530l4 3M1494 543l6 3M1488 543l4 1" stroke="#4d8f92" strokeDasharray="2 1" />
      <path d="M1487 516C1498 518 1506 545 1501 562" stroke="#4c7f8a" strokeWidth="1.500" />

      {/* original outline */}
      <ellipse cx="491" cy="805" rx="10" ry="23" transform="rotate(-12 491 805)" stroke="#3d5f63" strokeWidth="1.500" />
      <path d="M488 782L992 649" stroke="#41646a" strokeWidth="1.500" />
      <path d="M992 649L1487 517" stroke="#4f8285" />
      <path d="M498 828L661 785" stroke="#52511f" strokeWidth="1.500" />
      <circle cx="992.500" cy="652" r="2" fill="#3f7074" stroke="#2d5558" />
      <circle cx="992" cy="667" r="2" fill="#1c3aa8" />

      {/* force */}
      <path d="M482 683h12l1 71h-11z" fill="url(#arrow)" />
      <ellipse cx="488" cy="683" rx="6" ry="3" fill="#b3ae14" />
      <path d="M477 750l15 34 12-34z" fill="url(#arrow)" />
      <ellipse cx="490.500" cy="750" rx="13.500" ry="5" fill="#b3ae14" />
      <path d="M484 725h11v27q-5 2-11 0z" fill="url(#arrow)" />

      {/* axes */}
      <path d="M390 1036v-18" stroke="#2aa04a" strokeWidth="1.500" />
      <path d="M390 1036l-16 5" stroke="#1c1c8c" strokeWidth="1.500" />
      <path d="M390 1036l8 5" stroke="#a02020" strokeWidth="1.500" />
      <path d="M389.500 1010l-6 11q6 4 12 0z" fill="#118a1c" />
      <path d="M364 1043l10-7q4 5 1 11z" fill="#1a1aa8" />
      <circle cx="400" cy="1043" r="5.500" fill="#c01414" />
      <g className="font-['Noto_Sans',sans-serif] text-xs">
        <text x="385" y="1008" fill="#35e05c">Y</text>
        <text x="355" y="1050" fill="#3c3cf0">Z</text>
        <text x="404" y="1054" fill="#f03c3c">X</text>
      </g>
    </svg>
  );
}

const LEGEND = ['0,0934', '0,07', '0,0467', '0,0233'];

function Legend() {
  return (
    <div className="absolute top-[43px] left-[19px] font-['Noto_Sans',sans-serif] text-[15px] font-light text-[#e8ffff]">
      <div className="leading-[18px]">Тип: Смещение по оси Y</div>
      <div className="leading-[18px]">Единица: mm</div>
      <div className="pt-[3px] leading-[18px]">Вт 09.07.19, 8:03:27</div>
      <div className="flex gap-[9px] pt-5 text-sm">
        <div className="flex h-[503px] w-[21px] flex-col border-2 border-[#222] bg-[linear-gradient(to_bottom,#f00_0%,#ff0_25%,#0f0_50%,#0ff_75%,#00f_100%)]">
          {LEGEND.map((l) => <span key={l} className="flex-1 border-b border-[#222]" />)}
          <span className="flex-1" />
        </div>
        <div className="-mt-[17px] flex flex-col leading-5">
          <span className="h-[100px]">0,1167</span>
          {LEGEND.map((l) => <span key={l} className="h-[100px]">{l}</span>)}
          <span className="pt-1">0 Макс</span>
        </div>
      </div>
    </div>
  );
}

function ViewCube() {
  return (
    <svg viewBox="0 0 80 90" className="absolute top-[49px] right-[20px] h-[90px] w-20" fill="none" aria-hidden="true">
      <defs>
        <filter id="soft" x="-30%" y="-30%" width="160%" height="160%"><feGaussianBlur stdDeviation="4" /></filter>
      </defs>
      <path d="M12 60l22 20 42-15-4 8-38 12z" fill="#0b5a5c" opacity=".6" filter="url(#soft)" />
      <path d="M6 13l41-8 25 13-47 11z" fill="#7fcbc8" />
      <path d="M6 13l19 16 2 47L9 57z" fill="#6fbfbd" />
      <path d="M25 29l47-11v46L27 76z" fill="#8ad0ce" />
      <g stroke="#5f8a8a" strokeWidth="1.500" strokeDasharray="9 3">
        <path d="M6 13l41-8 25 13-47 11zM6 13l3 44 18 19 45-12V18M25 29l2 47" />
      </g>
      <g className="font-['Noto_Sans',sans-serif]" fill="#3f6c70">
        <text x="31" y="54" className="text-xs" transform="rotate(-10 31 54)">Справа</text>
        <text x="8" y="39" className="text-[8px]" transform="rotate(48 8 39)">Сзади</text>
        <text x="28" y="13" className="text-[8px]" transform="rotate(28 28 13)">Снизу</text>
      </g>
    </svg>
  );
}

const Drop = () => (
  <svg viewBox="0 0 5 3" className="h-[3px] w-[5px]" fill="#33696c" aria-hidden="true"><path d="M0 0h5L2.500 3z" /></svg>
);

function NavBar() {
  return (
    <div className="absolute top-[145px] right-[2px] flex h-[231px] w-[34px] flex-col items-center gap-2 rounded-[5px] border-2 border-[#3c8083] bg-[#74bfbf] py-[2px]">
      <button aria-label="Закрыть панель" className="mr-px flex h-2 w-2 self-end rounded-full bg-[#3c7275]">
        <svg viewBox="0 0 8 8" className="h-2 w-2" stroke="#cfeeee" aria-hidden="true"><path d="M2 2l4 4M6 2L2 6" /></svg>
      </button>
      <button aria-label="Штурвал">
        <svg viewBox="0 0 24 24" className="h-6 w-6" fill="#b4dede" stroke="#3c7b7e" aria-hidden="true">
          <path d="M12 1.500h10.500V12A10.500 10.500 0 1112 1.500z" /><circle cx="12" cy="12" r="6" fill="#8ccaca" />
          <path d="M4 20l4-4M20 20l-4-4" />
        </svg>
      </button>
      <span className="flex w-6 flex-col items-center gap-1 border-b border-[#3c8083] pb-1"><Drop /></span>
      <button aria-label="Панорамирование">
        <svg viewBox="0 0 24 24" className="h-6 w-6" fill="#c8e8e8" stroke="#3c7b7e" aria-hidden="true">
          <path d="M9 22l-3-5-5-5c-1-2 1-3 3-1l3 2-3-8c0-2 2-2 3 0l2 6V2c0-2 3-2 3 0v8l2-7c1-2 3-1 2.500 1L15 12l4-6c1-1 3 0 2 2l-3 7c0 4-1 5-3 7z" />
        </svg>
      </button>
      <button aria-label="Зумирование">
        <svg viewBox="0 0 24 24" className="h-6 w-6" fill="#c8e8e8" stroke="#3c7b7e" aria-hidden="true">
          <path d="M1.500 1.500h10l4 4v14h-14zM11.500 1.500v4h4" /><path d="M18 19l4 4" strokeWidth="2.500" /><circle cx="14.500" cy="15.500" r="4.500" />
        </svg>
      </button>
      <Drop />
      <button aria-label="Орбита">
        <svg viewBox="0 0 24 24" className="h-6 w-6" fill="none" stroke="#3c7b7e" strokeWidth="1.500" aria-hidden="true">
          <path d="M8 8c-4 1-7 2-7 4s3 3 7 4M16 16c4-1 7-2 7-4s-2-3-5-4" />
          <ellipse cx="12" cy="12" rx="4" ry="10" /><path d="M12 9v6M9 12h8M15 4l2 2-2 2" />
        </svg>
      </button>
      <Drop />
      <button aria-label="Вид на грань">
        <svg viewBox="0 0 24 24" className="h-6 w-6" fill="#b4dede" stroke="#3c7b7e" aria-hidden="true">
          <path d="M1.500 8L8 1v6M10 7l6-5v5" /><path d="M.5 7.500h23v14H.5z" /><path d="M4.500 10.500h15v7h-15z" fill="#74a9ab" />
        </svg>
      </button>
      <button aria-label="Настройка панели" className="mt-auto mr-px flex h-2 w-2 self-end rounded-full bg-[#3c7275]">
        <svg viewBox="0 0 8 8" className="h-2 w-2" fill="#cfeeee" aria-hidden="true"><path d="M2 2h4v1H2zM2 4h4L4 6z" /></svg>
      </button>
    </div>
  );
}

function Viewport() {
  return (
    <div className="relative min-h-0 flex-1 overflow-hidden bg-[linear-gradient(to_bottom,#049896,#d8efee)]">
      <Scene />
      <Legend />
      <ViewCube />
      <NavBar />
      <div className="absolute top-[6px] right-[3px] flex items-center gap-2">
        <button aria-label="Упорядочить">
          <svg viewBox="0 0 12 11" className="h-[11px] w-3" fill="none" stroke="#404a58" aria-hidden="true"><path d="M.5.500h11v10H.5zM6.500.500v10M6.500 5.500h5" /></svg>
        </button>
        <button aria-label="Закрыть вид">
          <svg viewBox="0 0 10 10" className="h-[10px] w-[10px]" stroke="#404a58" strokeWidth="1.500" aria-hidden="true"><path d="M0 0l10 10M10 0L0 10" /></svg>
        </button>
      </div>
    </div>
  );
}

function DocTabs() {
  return (
    <div className="flex h-6 bg-[#d9d9d9] text-[11px]">
      <button aria-label="Домой" className="w-7 pl-1">
        <svg viewBox="0 0 16 16" className="h-4 w-4" fill="none" stroke="#555" aria-hidden="true">
          <path d="M0 8.500L8 1l8 7.500M12.500 3V1.500h1V5" /><path d="M2.500 7v8.500h11V7M6.500 15v-5h3v5" fill="#f5f5f5" />
        </svg>
      </button>
      <div className="flex w-20 items-center gap-2 border-b-[3px] border-[#3ba0d8] bg-[#f0f0f0] pl-2 text-[#3a93c8]">
        <a href="#part">Деталь1</a>
        <button aria-label="Закрыть документ">
          <svg viewBox="0 0 8 8" className="h-2 w-2" stroke="#444" strokeWidth="1.500" aria-hidden="true"><path d="M0 0l8 8M8 0L0 8" /></svg>
        </button>
      </div>
      <button aria-label="Список документов" className="ml-auto pr-[5px]">
        <svg viewBox="0 0 14 12" className="h-3 w-[14px]" stroke="#666" strokeWidth="2" aria-hidden="true"><path d="M0 1h14M0 6h14M0 11h14" /></svg>
      </button>
    </div>
  );
}

function StatusBar() {
  return (
    <footer className="flex h-[6px] justify-end bg-[#f0f0f0]">
      <span className="w-10 border-l border-[#d0d0d0]" />
      <span className="w-10 border-x border-[#d0d0d0]" />
    </footer>
  );
}

export default function App() {
  return (
    <div className="flex h-screen flex-col overflow-hidden bg-[#f5f5f5] font-['Open_Sans','Noto_Sans',sans-serif]">
      <Defs />
      <TopTabs />
      <Ribbon />
      <div className="flex min-h-0 flex-1">
        <Browser />
        <main className="flex min-w-0 flex-1 flex-col">
          <Viewport />
          <DocTabs />
        </main>
      </div>
      <StatusBar />
    </div>
  );
}
